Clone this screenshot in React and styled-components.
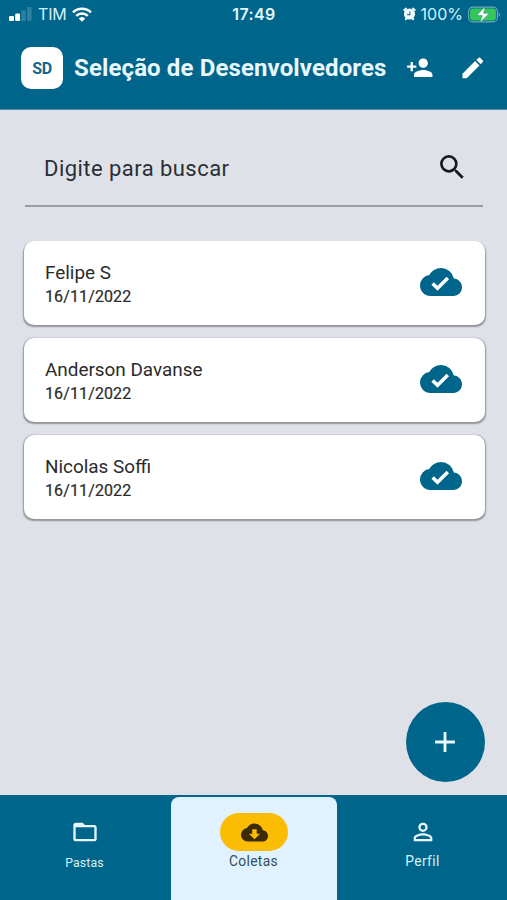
import React from "react";
import styled, { createGlobalStyle } from "styled-components";
import {
  MdAdd,
  MdCloudDone,
  MdCloudDownload,
  MdEdit,
  MdFolderOpen,
  MdPersonAdd,
  MdPersonOutline,
  MdSearch,
} from "react-icons/md";

const GlobalStyle = createGlobalStyle`
  * { box-sizing: border-box; }
  body {
    margin: 0;
    font-family: Roboto, "Liberation Sans", sans-serif;
  }
`;

const Screen = styled.div`
  position: relative;
  display: flex;
  flex-direction: column;
  width: 507px;
  height: 900px;
  background: #dee1e8;
  overflow: hidden;
`;

// Status bar
const StatusBar = styled.div`
  display: grid;
  grid-template-columns: 1fr auto 1fr;
  align-items: center;
  height: 28px;
  padding: 0 6px 0 9px;
  background: #00658b;
  color: #d3f1fb;
  font-family: Inter, sans-serif;
  font-size: 16px;
`;

const StatusGroup = styled.div`
  display: flex;
  align-items: center;
  justify-content: ${props => props.$end ? "flex-end" : "flex-start"};
  gap: ${props => props.$gap};
`;

const StatusText = styled.span`
  letter-spacing: ${props => props.$spacing || "0"};
  white-space: nowrap;
`;

const Clock = styled.span`
  margin-right: 2px;
  font-weight: 600;
  letter-spacing: 0.4px;
  color: #e2f6fd;
`;

// Header
const Header = styled.header`
  display: flex;
  align-items: center;
  height: 82px;
  padding: 0 20px 1px 21px;
  background: #00658b;
  border-bottom: 1px solid #4f8eaa;
  color: #e9f8ff;
`;

const Avatar = styled.div`
  display: flex;
  align-items: center;
  justify-content: center;
  width: 42px;
  height: 42px;
  margin-right: 11px;
  border-radius: 10px;
  background: #fff;
  color: #12668a;
  font-size: 16px;
  font-weight: 700;
  letter-spacing: -0.3px;
`;

const Title = styled.h1`
  flex: 1;
  margin: 0;
  font-size: 24px;
  font-weight: 700;
  letter-spacing: 0.12px;
  white-space: nowrap;
`;

const HeaderActions = styled.div`
  display: flex;
  gap: 26px;
  color: #fff;
`;

// Content
const Content = styled.main`
  flex: 1;
  padding: 19px 22px 0 23px;
`;

const SearchField = styled.div`
  display: flex;
  align-items: center;
  justify-content: space-between;
  height: 78px;
  margin: 0 2px 34px;
  padding: 0 15px 0 19px;
  border-bottom: 2px solid #999ca3;
  color: #15191d;
`;

const Placeholder = styled.span`
  margin-top: 2px;
  font-size: 22px;
  letter-spacing: 0.45px;
  color: #2b2f35;
`;

const List = styled.div`
  display: flex;
  flex-direction: column;
  gap: 13px;
  padding: 0 0.5px;
`;

const Card = styled.div`
  display: flex;
  align-items: center;
  justify-content: space-between;
  height: 84px;
  padding: 0 22.5px 2px 21.5px;
  border-radius: 10px;
  background: #fff;
  box-shadow: 0 1.2px 1.5px 0.2px rgba(0, 0, 0, 0.34);
  color: #00658b;
`;

const CardText = styled.div`
  display: flex;
  flex-direction: column;
  gap: 1px;
  padding-top: 5px;
  color: #2b2b2b;
`;

const Name = styled.span`
  font-size: 18.9px;
  line-height: 24px;
`;

const CollectedAt = styled.span`
  font-size: 16px;
  line-height: 22px;
  letter-spacing: 0.12px;
  -webkit-text-stroke: 0.2px #2b2b2b;
`;

const Fab = styled.button`
  position: absolute;
  right: 22px;
  bottom: 118px;
  display: flex;
  align-items: center;
  justify-content: center;
  width: 79px;
  height: 80px;
  padding: 0 1px 0 0;
  border: 0;
  border-radius: 50%;
  background: #00658b;
  color: #e9f8ff;
`;

// Bottom navigation
const BottomNav = styled.nav`
  display: grid;
  grid-template-columns: 169px 169px 169px;
  height: 105px;
  background: #00658b;
`;

const Tab = styled.div`
  display: flex;
  flex-direction: column;
  align-items: center;
  margin: 2px 1px 0 2px;
  padding-top: 16px;
  border-radius: 8px 8px 0 0;
  background: ${props => props.$active ? "#e0f2ff" : "transparent"};
  color: ${props => props.$active ? "#2f4d5c" : "#d7f1fc"};
`;

const TabIcon = styled.div`
  display: flex;
  align-items: center;
  justify-content: center;
  width: 68px;
  height: 38px;
  padding-bottom: ${props => props.$active ? "0" : "1px"};
  border-radius: 19px;
  background: ${props => props.$active ? "#fbbc04" : "transparent"};
  color: ${props => props.$active ? "#3a2b05" : "#e6f7ff"};
`;

const TabLabel = styled.span`
  margin-top: ${props => props.$small ? "3px" : "1px"};
  margin-right: 1px;
  font-size: ${props => props.$small ? "12.3px" : "13.8px"};
  line-height: 18px;
  letter-spacing: ${props => props.$small ? "0.15px" : "0.35px"};
`;

const SignalIcon = () => (
  <svg width="23" height="14" viewBox="0 0 23 14" fill="#fff">
    <rect x="0" y="9" width="5" height="5" rx="1" />
    <rect x="6.2" y="6.5" width="4.8" height="7.5" rx="1" />
    <rect x="12.2" y="3.3" width="4.6" height="10.7" rx="1" opacity="0.18" />
    <rect x="18" y="0" width="4.6" height="14" rx="1" opacity="0.18" />
  </svg>
);

const WifiIcon = () => (
  <svg width="20" height="15" viewBox="0 0 20 15" fill="none" stroke="#fff" strokeWidth="2.5">
    <path d="M1 5.4a13 13 0 0 1 18 0" />
    <path d="M4.2 8.9a8.4 8.4 0 0 1 11.6 0" />
    <path d="M10 14.7 6.7 11.5a4.8 4.8 0 0 1 6.6 0z" fill="#fff" stroke="none" />
  </svg>
);

const AlarmIcon = () => (
  <svg width="13" height="14" viewBox="0 0 13 14">
    <path d="M1.3 3 3 1.6M11.7 3 10 1.6M2.8 12.2l.8-.8M10.2 12.2l-.8-.8" stroke="#e5f7ff" strokeWidth="2" strokeLinecap="round" />
    <circle cx="6.5" cy="7" r="5.6" fill="#f2fbff" />
    <path d="M6.9 4.2v3.4H4.1" stroke="#28718e" strokeWidth="1.1" fill="none" />
  </svg>
);

const BatteryIcon = () => (
  <svg width="33" height="17" viewBox="0 0 33 17">
    <rect x="0.6" y="1.1" width="28.8" height="14.8" rx="4.4" fill="none" stroke="#6fa8bd" strokeWidth="1.1" />
    <rect x="2.1" y="2.6" width="25.8" height="11.8" rx="3" fill="#35c759" />
    <path d="M30.8 6.2c1.7.8 1.7 3.8 0 4.6z" fill="#6fa8bd" />
    <path d="M17.2.4 8.8 9.5h5.4L12 16.8l9.2-9.5h-5.6z" fill="#fff" stroke="#087460" strokeWidth="0.4" />
  </svg>
);

const collects = [
  { name: "Felipe S", date: "16/11/2022" },
  { name: "Anderson Davanse", date: "16/11/2022" },
  { name: "Nicolas Soffi", date: "16/11/2022" },
];

const App = () => {
  return (
    <>
      <GlobalStyle />
      <Screen>
        <StatusBar>
          <StatusGroup $gap="6px">
            <SignalIcon />
            <StatusText $spacing="-0.2px">TIM</StatusText>
            <WifiIcon />
          </StatusGroup>
          <Clock>17:49</Clock>
          <StatusGroup $end $gap="5px">
            <AlarmIcon />
            <StatusText>100%</StatusText>
            <BatteryIcon />
          </StatusGroup>
        </StatusBar>

        <Header>
          <Avatar>SD</Avatar>
          <Title>Seleção de Desenvolvedores</Title>
          <HeaderActions>
            <MdPersonAdd size={27.6} />
            <MdEdit size={27.6} />
          </HeaderActions>
        </Header>

        <Content>
          <SearchField>
            <Placeholder>Digite para buscar</Placeholder>
            <MdSearch size={32.5} />
          </SearchField>
          <List>
            {collects.map(item => (
              <Card key={item.name}>
                <CardText>
                  <Name>{item.name}</Name>
                  <CollectedAt>{item.date}</CollectedAt>
                </CardText>
                <MdCloudDone size={42} />
              </Card>
            ))}
          </List>
        </Content>

        <Fab aria-label="Adicionar">
          <MdAdd size={34} />
        </Fab>

        <BottomNav>
          <Tab>
            <TabIcon><MdFolderOpen size={28} /></TabIcon>
            <TabLabel $small>Pastas</TabLabel>
          </Tab>
          <Tab $active>
            <TabIcon $active><MdCloudDownload size={27} /></TabIcon>
            <TabLabel>Coletas</TabLabel>
          </Tab>
          <Tab>
            <TabIcon><MdPersonOutline size={28} /></TabIcon>
            <TabLabel>Perfil</TabLabel>
          </Tab>
        </BottomNav>
      </Screen>
    </>
  );
};

export default App;
